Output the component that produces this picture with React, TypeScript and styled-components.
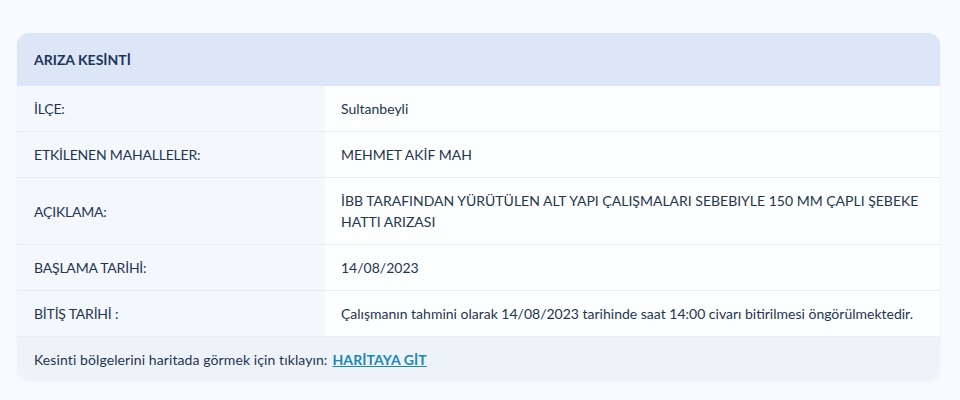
import * as React from 'react'
import styled, { createGlobalStyle } from 'styled-components'

const GlobalStyle = createGlobalStyle`
  html, body {
    margin: 0;
    padding: 0;
    background: #f8fafd;
    font-family: Lato, 'Noto Sans', sans-serif;
    color: #1f3554;
  }
`

const Page = styled.div`
  width: 960px;
  height: 400px;
  box-sizing: border-box;
  padding: 33px 20px 0 17px;
`

const Card = styled.div`
  border-radius: 12px;
  overflow: hidden;
  background: #ffffff;
  box-shadow: 0 1px 3px rgba(30, 60, 110, 0.04);
`

const Header = styled.div`
  height: 53px;
  display: flex;
  align-items: center;
  padding: 0 17px;
  background: #dde6f6;
  font-size: 14px;
  font-weight: 700;
  color: #1d3559;
`

const Row = styled.div`
  display: grid;
  grid-template-columns: 308px 1fr;
  border-bottom: 1px solid #e8edf4;
`

const Label = styled.div`
  background: #f4f7fc;
  padding: 12px 17px;
  display: flex;
  align-items: center;
  font-size: 14px;
  line-height: 21px;
  letter-spacing: -0.2px;
`

const Value = styled.div`
  background: #fdfeff;
  padding: 12px 16px;
  display: flex;
  align-items: center;
  font-size: 14px;
  line-height: 21px;
  color: #23364f;
`

const ValueText = styled.span`
  max-width: 590px;
`

const Footer = styled.div`
  height: 44px;
  display: flex;
  align-items: center;
  padding: 0 17px;
  background: #eef3fa;
  font-size: 14px;
  letter-spacing: 0.1px;
`

const MapLink = styled.a`
  margin-left: 5px;
  color: #1b86b6;
  font-weight: 700;
  text-decoration: underline;
  cursor: pointer;
`

const rows: [string, string][] = [
  ['İLÇE:', 'Sultanbeyli'],
  ['ETKİLENEN MAHALLELER:', 'MEHMET AKİF MAH'],
  [
    'AÇIKLAMA:',
    'İBB TARAFINDAN YÜRÜTÜLEN ALT YAPI ÇALIŞMALARI SEBEBIYLE 150 MM ÇAPLI ŞEBEKE HATTI ARIZASI',
  ],
  ['BAŞLAMA TARİHİ:', '14/08/2023'],
  [
    'BİTİŞ TARİHİ :',
    'Çalışmanın tahmini olarak 14/08/2023 tarihinde saat 14:00 civarı bitirilmesi öngörülmektedir.',
  ],
]

const App = () => (
  <>
    <GlobalStyle />
    <Page>
      <Card>
        <Header>ARIZA KESİNTİ</Header>
        {rows.map(([label, value]) => (
          <Row key={label}>
            <Label>{label}</Label>
            <Value>
              <ValueText>{value}</ValueText>
            </Value>
          </Row>
        ))}
        <Footer>
          Kesinti bölgelerini haritada görmek için tıklayın:
          <MapLink>HARİTAYA GİT</MapLink>
        </Footer>
      </Card>
    </Page>
  </>
)

export default App
